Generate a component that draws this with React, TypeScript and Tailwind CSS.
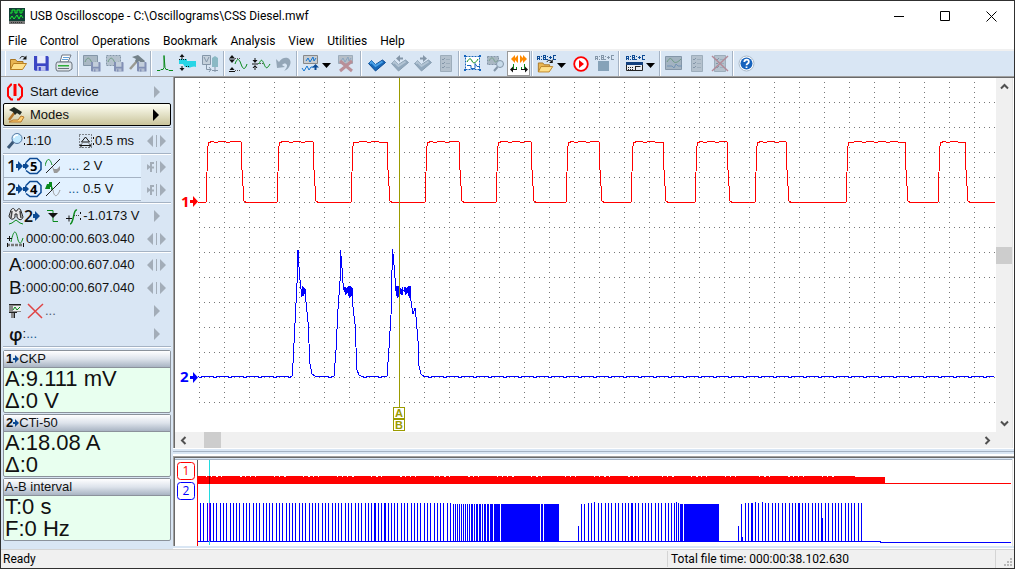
import type { ReactNode } from 'react';

const menuItems = ['File', 'Control', 'Operations', 'Bookmark', 'Analysis', 'View', 'Utilities', 'Help'];

const GREEN = '#0a8a1c';
const NAVY = '#0c4a94';
const MUTED = '#9dadbb';
const MUTED_DARK = '#8496a8';

/* ---------- shared drawing pieces ---------- */

function Icon({ children, size = 20 }: { children: ReactNode; size?: number }) {
  return (
    <svg width={size} height={size} viewBox={`0 0 ${size} ${size}`} fill="none" className="shrink-0" aria-hidden="true">
      {children}
    </svg>
  );
}

function Floppy({ x, y, s, body, label }: { x: number; y: number; s: number; body: string; label: string }) {
  return (
    <g transform={`translate(${x} ${y}) scale(${s})`}>
      <path d="M0 0h13l1 1v13H1l-1-1z" fill={body} />
      <path d="M3 0h8v7H3z" fill={label} />
      <path d="M3 9.500h8V14H3z" fill={label} opacity=".75" />
      <path d="M4.500 10.500h2V14h-2z" fill={body} />
    </g>
  );
}

function Folder() {
  return (
    <g>
      <path d="M1.500 15.500v-10h5l1.500 2H14v3" fill="#e8b552" stroke="#a87422" />
      <path d="M1.500 15.500l3-6h13l-4 6z" fill="#ffe08a" stroke="#b98022" />
      <path d="M11 4.500c1-2.500 3-2.500 5-1" stroke="#111" />
      <path d="M17.500 1.500v4h-4z" fill="#111" />
    </g>
  );
}

function Hammer({ handle, head }: { handle: string; head: string }) {
  return (
    <g>
      <path d="M10 6L2 15" stroke={handle} strokeWidth="2.500" />
      <path d="M4 3l6-2 7 6-2 3-4-3-2 2-2-2 1-2z" fill={head} />
    </g>
  );
}

function AbcLabel({ color }: { color: string }) {
  return (
    <g stroke={color} shapeRendering="crispEdges">
      <path d="M1.500 6V2.500h2V6M1.500 4.500h2M7.500 6V1.500h2V6M7.500 3.500h2M7.500 5.500h3M13 3.500h3M14.500 2v3M20 1.500h-2.500v4H20" />
      <path d="M5 2.500h1M5 5.500h1M11 2.500h1M11 5.500h1" />
    </g>
  );
}

function Check({ from, to, edge }: { from: string; to: string; edge: string }) {
  return (
    <>
      <path d="M1.500 9.500l3-3 4 4 7-4.500 3 2.500-10 8.500z" fill={to} stroke={edge} strokeLinejoin="round" />
      <path d="M3 9.500l1.500-1.500 4 4 7-4.500" stroke={from} strokeWidth="2" />
    </>
  );
}

function UpDown({ x, top, bottom }: { x: number; top: number; bottom: number }) {
  return (
    <g fill="#111">
      <path d={`M${x - 2.5} ${top + 3}h5l-2.500 -3z`} />
      <path d={`M${x - 2.5} ${top + 5}h5l-2.500 3z`} />
      <path d={`M${x - 3} ${top + 3.5}h6v1h-6z`} />
      <path d={`M${x - 2.5} ${bottom - 2}h5l-2.500 -3z`} />
      <path d={`M${x - 3} ${bottom - 1}h6v1h-6z`} />
    </g>
  );
}

function SheetLines() {
  return (
    <>
      <path d="M4.500 1.500h11v16h-11z" fill="#b4c1cd" stroke={MUTED} />
      <path d="M6 5l1 1 2-2M6 9l1 1 2-2M6 13l1 1 2-2" stroke={MUTED_DARK} />
      <path d="M10 5.500h4M10 9.500h4M10 13.500h4" stroke={MUTED} />
    </>
  );
}

/* ---------- toolbar ---------- */

const toolbarIcons: Record<string, ReactNode> = {
  Open: <Folder />,
  Save: <Floppy x={2} y={2} s={1.05} body="#3b46c4" label="#e8ecfb" />,
  Print: (
    <>
      <path d="M5 8l2-7h9l-3 7z" fill="#fff" stroke="#6c7480" />
      <path d="M8 3.500h6M7 5.500h6" stroke="#62a0d8" />
      <path d="M2 8h14l1 2v5l-3 2H2l-1-2v-5z" fill="#dfe5ea" stroke="#69727c" />
      <path d="M3 11h11v1.500H3z" fill="#2fae3b" />
      <path d="M3 14.500h11" stroke="#69727c" />
    </>
  ),
  'Save screen': (
    <>
      <path d="M1.500 1.500h14v10h-14z" fill="#aab8c4" stroke={MUTED_DARK} />
      <path d="M3 8c2-5 4-5 6-1s3 2 5 1" stroke="#6f9b86" />
      <Floppy x={9} y={8} s={0.68} body="#8290b5" label="#c3cedb" />
    </>
  ),
  'Save fragment': (
    <>
      <path d="M1.500 1.500h14v10h-14z" fill="#b4c1cd" stroke={MUTED_DARK} strokeDasharray="2 1" />
      <path d="M3 8c2-5 4-5 6-1s3 2 5 1" stroke="#6f9b86" />
      <Floppy x={9} y={8} s={0.68} body="#8290b5" label="#c3cedb" />
    </>
  ),
  'Save settings': (
    <>
      <Hammer handle="#9a9a92" head="#74828a" />
      <Floppy x={9} y={8} s={0.68} body="#8290b5" label="#c3cedb" />
    </>
  ),
  Spectrum: <path d="M2 16.500h3l1-1h2l1-2V1.500l1 12 1 2h2l1 1h4" stroke={GREEN} />,
  Level: (
    <>
      <path d="M1 5h8v2h9v6c-3-2-6 2-9 0H7l-2-3H1z" fill="#27d5e6" />
      <path d="M1 5.500h8M8 12.500h4" stroke="#111" strokeDasharray="1 1" />
      <path d="M4 0l2.500 3h-5zM4 17l2.500-3h-5zM3.500 3h1v2h-1zM3.500 12h1v2h-1z" fill="#111" />
    </>
  ),
  Voltmeter: (
    <>
      <path d="M1.500 1.500h8v9h-8z" fill="#c5d1dc" stroke={MUTED_DARK} />
      <path d="M3 3l2.500 5L8 3M5.500 11v4.500H10M8 13l2 2.500L8 18" stroke={MUTED_DARK} />
      <path d="M11 4l3-2 3 2v9h-6z" fill="#8ab9c4" />
      <path d="M11 16.500h6M14 13v5" stroke={MUTED_DARK} />
    </>
  ),
  'Fit height': (
    <>
      <UpDown x={4} top={1} bottom={18} />
      <path d="M7 4.500h5M7 16.500h5" stroke="#555" strokeDasharray="1 1" />
      <path d="M7 10c2-6 4-6 6 0s4 6 6 0" stroke={GREEN} />
    </>
  ),
  'Compress height': (
    <>
      <path d="M4 9L1.500 6h5zM4 11l-2.500 3h5zM3.500 4h1v3h-1zM3.500 13h1v3h-1zM1 9.500h6v1H1z" fill="#111" />
      <path d="M7 9.500h6" stroke="#555" strokeDasharray="1 1" />
      <path d="M8 10c2-5 3-5 5 0s3 5 6 0" stroke={GREEN} />
    </>
  ),
  Undo: <path d="M2 5l3 3c4-7 14-5 11 3-1 3-3 5-6 6 3-3 4-6 2-7-1-1-3 0-4 1l3 2-8 1z" fill="#94a6b7" />,
  'Add trace': (
    <>
      <path d="M2.500 1.500h14v8h-14z" fill="#c7ccd1" stroke="#888" />
      <path d="M5 7l2-3 2 4 3-5 1 4 2-3" stroke="#1274d0" />
      <path d="M1 14l2 3 3-5 2 4 2-3h3" stroke="#1274d0" />
      <path d="M14.500 10l3.500 3.500h-7zM13.500 13h2v3h-2z" fill={NAVY} />
    </>
  ),
  'Remove trace': (
    <>
      <path d="M2.500 1.500h14v8h-14z" fill="#b5bec7" stroke={MUTED} />
      <path d="M5 7l2-3 2 4 3-5 1 4 2-3" stroke="#8aa5bf" />
      <path d="M4 7l12 10M16 7L4 17" stroke="#b98f98" strokeWidth="3" />
    </>
  ),
  'Set bookmark': <Check from="#4aa0e6" to="#1668b8" edge="#0c4a94" />,
  'Previous bookmark': (
    <>
      <Check from="#b2c4d4" to="#91a8bd" edge="#899fb2" />
      <path d="M6 4.500L10 1v2.500h3v2h-3V8z" fill={MUTED_DARK} />
    </>
  ),
  'Next bookmark': (
    <>
      <Check from="#b2c4d4" to="#91a8bd" edge="#899fb2" />
      <path d="M14 4.500L10 1v2.500H7v2h3V8z" fill={MUTED_DARK} />
    </>
  ),
  'Bookmark list': <SheetLines />,
  'Select area': (
    <>
      <path d="M2.500 2.500h14v13h-14z" fill="#fff" stroke="#1765bd" strokeDasharray="2 1" />
      <path d="M4 8c2-4 4-4 5-1s4 2 6-2" stroke={GREEN} />
      <path d="M4 11.500h4v3h4v-5l2 3h3" stroke="#1765bd" />
      <path d="M1 1h2v2H1zM16 1h2v2h-2zM1 15h2v2H1zM16 15h2v2h-2z" fill="#1765bd" />
    </>
  ),
  'Zoom area': (
    <>
      <path d="M1.500 2.500h11v8h-11z" fill="#a9b7c3" stroke={MUTED_DARK} strokeDasharray="2 1" />
      <path d="M3 7c2-4 4-4 5-1s2 2 4 0" stroke="#79a28d" />
      <circle cx="14" cy="10" r="3.500" fill="#c8dbea" stroke={MUTED_DARK} />
      <path d="M11.500 13L8 17" stroke={MUTED_DARK} strokeWidth="2" />
    </>
  ),
  'Run analysis': (
    <>
      <path d="M2 5l4-4v3l3-3v8L6 6v3zM18 5l-4-4v3l-3-3v8l3-3v3z" fill="#ff8a00" />
      <path d="M4.500 10v5.500h3V13M15.500 10v5.500h-3V13" stroke={GREEN} />
      <path d="M1 15.500l3-3v6zM19 15.500l-3-3v6zM4 15h4v1H4zM12 15h4v1h-4z" fill="#111" />
    </>
  ),
  'Open script': (
    <>
      <AbcLabel color={NAVY} />
      <g transform="translate(1 4) scale(.9)">
        <Folder />
      </g>
    </>
  ),
  'Run script': (
    <>
      <circle cx="10" cy="10" r="6.800" fill="#fff" stroke="#f00" strokeWidth="1.800" />
      <path d="M8 6l5 4-5 4z" fill="#f00" />
    </>
  ),
  'Stop script': (
    <>
      <AbcLabel color={MUTED_DARK} />
      <path d="M4 7h11v10H4z" fill="#86a2b8" />
    </>
  ),
  'Script panel': (
    <>
      <AbcLabel color={NAVY} />
      <path d="M1.500 8.500h16v8h-16z" fill="#e9edf2" stroke="#222" />
      <path d="M1 8h17v3H1z" fill="#12407e" />
      <path d="M3 13.500h5M3 15.500h5" stroke="#222" strokeDasharray="1 1" />
      <path d="M10.500 12.500h5M10.500 12v4" stroke="#222" />
    </>
  ),
  Picture: (
    <>
      <path d="M1.500 2.500h16v13h-16z" fill="#a3b3c1" stroke={MUTED_DARK} />
      <path d="M3 8c3-5 4-4 6-1s5 1 8-2" stroke="#6f9b86" />
      <path d="M3 12h5l2 2 2-4 2 2h4" stroke="#7292b4" />
    </>
  ),
  Report: <SheetLines />,
  'Delete report': (
    <>
      <SheetLines />
      <path d="M2 2l16 15M18 2L2 17" stroke="#b28b99" strokeWidth="1.500" />
    </>
  ),
  Help: (
    <>
      <circle cx="9.500" cy="9.500" r="7.500" fill="#fff" stroke="#a9b9c9" />
      <circle cx="9.500" cy="9.500" r="6" fill="#1763bd" />
      <path d="M7.300 8c0-3.300 5-3.300 4.500 0 0 1.500-2.300 1.500-2.300 3.300M9.500 12.500v1.600" stroke="#fff" strokeWidth="1.800" />
    </>
  ),
};

function Tool({ name, pressed = false }: { name: string; pressed?: boolean }) {
  return (
    <button
      type="button"
      aria-label={name}
      className={`flex w-[23px] shrink-0 items-center justify-center ${pressed ? 'border border-[#999] bg-white' : ''}`}
    >
      <Icon>{toolbarIcons[name]}</Icon>
    </button>
  );
}

function ToolSep({ wide = false }: { wide?: boolean }) {
  return (
    <div className={`flex shrink-0 justify-center ${wide ? 'w-2' : 'w-1'}`}>
      <div className="w-px bg-[#a5b3c4]" />
      <div className="w-px bg-white" />
    </div>
  );
}

function DropArrow({ name }: { name: string }) {
  return (
    <button type="button" aria-label={name} className="flex w-3 shrink-0 items-center pt-1">
      <svg width="9" height="5" viewBox="0 0 9 5" aria-hidden="true">
        <path d="M0 0h9L4.500 5z" fill="#000" />
      </svg>
    </button>
  );
}

function Toolbar() {
  return (
    <div className="flex h-[25px] shrink-0 overflow-hidden bg-[#d9e6f4] pl-1" role="toolbar" aria-label="Main">
      <div className="mr-px w-px bg-white" />
      <Tool name="Open" />
      <Tool name="Save" />
      <Tool name="Print" />
      <ToolSep />
      <Tool name="Save screen" />
      <Tool name="Save fragment" />
      <Tool name="Save settings" />
      <ToolSep />
      <Tool name="Spectrum" />
      <Tool name="Level" />
      <Tool name="Voltmeter" />
      <ToolSep />
      <Tool name="Fit height" />
      <Tool name="Compress height" />
      <Tool name="Undo" />
      <ToolSep />
      <Tool name="Add trace" />
      <DropArrow name="Trace options" />
      <Tool name="Remove trace" />
      <ToolSep wide />
      <Tool name="Set bookmark" />
      <Tool name="Previous bookmark" />
      <Tool name="Next bookmark" />
      <Tool name="Bookmark list" />
      <ToolSep />
      <Tool name="Select area" />
      <Tool name="Zoom area" />
      <Tool name="Run analysis" pressed />
      <ToolSep />
      <Tool name="Open script" />
      <DropArrow name="Recent scripts" />
      <Tool name="Run script" />
      <Tool name="Stop script" />
      <ToolSep wide />
      <Tool name="Script panel" />
      <DropArrow name="Panel options" />
      <ToolSep />
      <Tool name="Picture" />
      <Tool name="Report" />
      <Tool name="Delete report" />
      <ToolSep />
      <Tool name="Help" />
    </div>
  );
}

/* ---------- sidebar ---------- */

function ArrowSingle({ dark = false }: { dark?: boolean }) {
  return (
    <svg width="30" height="12" viewBox="0 0 30 12" className="shrink-0" aria-hidden="true">
      <path d="M13 0v12l6-6z" fill={dark ? '#000' : '#a3adb8'} />
    </svg>
  );
}

function ArrowPair() {
  return (
    <svg width="30" height="12" viewBox="0 0 30 12" className="shrink-0" aria-hidden="true">
      <path d="M12 0v12L6 6zM19 0v12l6-6zM15 0h1v12h-1z" fill="#a3adb8" />
    </svg>
  );
}

function ArrowFlip() {
  return (
    <svg width="30" height="12" viewBox="0 0 30 12" className="shrink-0" aria-hidden="true">
      <path d="M13 2h-3v9M13 6.500H9" fill="none" stroke="#a3adb8" strokeWidth="2" />
      <path d="M6 3l4 3-4 3zM19 0v12l6-6zM15 0h1v12h-1z" fill="#a3adb8" />
    </svg>
  );
}

function Divider() {
  return (
    <div className="flex h-[3px] shrink-0 flex-col justify-end">
      <div className="h-px bg-[#a5b3c4]" />
      <div className="h-px bg-white" />
    </div>
  );
}

function Row({ label, children, arrow }: { label: string; children: ReactNode; arrow: ReactNode }) {
  return (
    <button type="button" aria-label={label} className="flex h-[23px] w-full shrink-0 items-center text-left">
      <span className="flex min-w-0 flex-1 items-center whitespace-nowrap">{children}</span>
      {arrow}
    </button>
  );
}

function ChannelMark({ n }: { n: number }) {
  return (
    <span className="flex items-center font-['Open_Sans',sans-serif] text-base leading-4 font-semibold">
      {n}
      <svg width="7" height="10" viewBox="0 0 7 10" className="shrink-0" aria-hidden="true">
        <path d="M0 3h2V0l5 5-5 5V7H0z" fill={NAVY} />
      </svg>
    </span>
  );
}

function Channel({ n, input, value, filled }: { n: number; input: number; value: string; filled: 'top' | 'bottom' }) {
  return (
    <button type="button" className="flex h-[23px] w-full items-center text-left">
      <span className="flex h-[23px] flex-1 items-center border-b border-l border-b-[#a5b3c4] border-l-[#a5b3c4] bg-[#e2f1ff] pl-[3px]">
        <ChannelMark n={n} />
        <svg width="20" height="18" viewBox="0 0 20 18" className="shrink-0" aria-hidden="true">
          <path d="M0 7h2V5l4 4-4 4v-2H0z" fill={NAVY} />
          <path d="M3 5.500l4-4h7l4 4v7l-4 4H7l-4-3" fill="none" stroke={NAVY} strokeWidth="1.500" />
          <text x="7" y="14" fontSize="13" fontWeight="700" fontFamily="Open Sans">{input}</text>
        </svg>
        <svg width="16" height="16" viewBox="0 0 16 16" className="ml-[2px] shrink-0" aria-hidden="true">
          {filled === 'top' ? (
            <>
              <path d="M0 8l2-5h2V1h3v4l1 3-2 1V6H5v2H2z" fill={GREEN} />
              <path d="M8 9c1 7 4 8 7 0" fill="none" stroke="#999" />
            </>
          ) : (
            <>
              <path d="M0 8c2-9 5-8 7-1" fill="none" stroke={GREEN} />
              <path d="M7 8l2 3h3l3-3v4l-3 3H9z" fill="#9a9a9a" />
            </>
          )}
          <path d="M15 1L1 15" stroke="#222" />
        </svg>
        <span className="ml-[7px] text-[#14598f]">...</span>
        <span className="ml-1">{value}</span>
      </span>
      <ArrowFlip />
    </button>
  );
}

function Readout({ title, mark, lines }: { title: string; mark?: number; lines: string[] }) {
  return (
    <section className="mb-px shrink-0 rounded-xs border border-[#8b929b] bg-[#e8ffef]">
      <h2 className="flex h-[17px] items-center border-b border-[#8b929b] bg-linear-to-b from-white via-[#dde3eb] to-[#a9b4c3] pl-px text-[13px] leading-4">
        {mark && (
          <span className="flex items-center pl-px font-bold">
            {mark}
            <svg width="6" height="8" viewBox="0 0 6 8" aria-hidden="true">
              <path d="M0 3h2V0l4 4-4 4V5H0z" fill={NAVY} />
            </svg>
          </span>
        )}
        {title}
      </h2>
      <div className="px-px text-[22px] leading-[22px]">
        {lines.map((line) => (
          <p key={line}>{line}</p>
        ))}
      </div>
    </section>
  );
}

function Sidebar() {
  return (
    <aside className="flex w-[172px] shrink-0 flex-col bg-[#d9e6f4] px-[2px] pt-[3px] font-['Liberation_Sans',sans-serif] text-[13px] leading-5 text-[#111]">
      <Row label="Start device" arrow={<ArrowSingle />}>
        <svg width="20" height="18" viewBox="0 0 20 18" className="mr-1 ml-[3px] shrink-0" aria-hidden="true">
          <path d="M6 1.500H5L2 5v8l3 3.500h2M12 1.500h1L16 5v8l-3 3.500h-2" fill="none" stroke="#f00" strokeWidth="2" />
          <path d="M7.500 1h3v12h-3z" fill="#f00" />
        </svg>
        Start device
      </Row>
      <button
        type="button"
        className="flex h-[23px] shrink-0 items-center rounded-xs border border-black bg-linear-to-b from-[#fffff4] to-[#c9c49b] text-left"
      >
        <svg width="20" height="18" viewBox="0 0 20 18" className="mr-[3px] ml-[3px] shrink-0" aria-hidden="true">
          <path d="M8 6l-6 8" stroke="#b5782c" strokeWidth="2.500" />
          <path d="M2 4l5-3 8 5-2 3-3-2-2 2-2-3z" fill="#242b22" />
          <path d="M2 16l4-2h5l3-4 3 1-3 5z" fill="#ffcf72" stroke="#b5782c" />
        </svg>
        <span className="flex-1">Modes</span>
        <ArrowSingle dark />
      </button>
      <Divider />
      <Row label="Scale" arrow={<ArrowPair />}>
        <svg width="20" height="18" viewBox="0 0 20 18" className="ml-[3px] shrink-0" aria-hidden="true">
          <path d="M8 9l-6 7" stroke="#3b5877" strokeWidth="3" />
          <circle cx="11" cy="6.500" r="5" fill="#c3eaff" stroke="#5779a3" />
          <path d="M8 6c0-2 2-3 4-3" fill="none" stroke="#fff" strokeWidth="1.500" />
          <path d="M18 5h1v2h-1zM18 11h1v2h-1z" fill="#111" />
        </svg>
        <span className="w-[51px]">1:10</span>
        <svg width="18" height="18" viewBox="0 0 18 18" className="shrink-0" aria-hidden="true">
          <path d="M2.500 2.500h12v13h-12z" fill="none" stroke="#222" strokeDasharray="1 2" />
          <path d="M8.500 5L4.500 10h8zM3 13.500h11M5 11.500l-2 2 2 2M12 11.500l2 2-2 2" fill="none" stroke="#111" />
          <path d="M16 5h1v2h-1zM16 11h1v2h-1z" fill="#111" />
        </svg>
        0.5 ms
      </Row>
      <Divider />
      <Channel n={1} input={5} value="2 V" filled="bottom" />
      <Channel n={2} input={4} value="0.5 V" filled="top" />
      <Divider />
      <Row label="Trigger" arrow={<ArrowSingle />}>
        <svg width="16" height="18" viewBox="0 0 16 18" className="ml-[5px] shrink-0" aria-hidden="true">
          <path d="M1 9l2-6c2-3 4-1 4 1h2c0-2 3-4 4 0l2 6c-1 4-5 3-6 0V7H7v3c-1 3-5 3-6-1z" fill="#e7e7e7" stroke="#222" />
          <path d="M4 4l-1 7M12 4l1 7" stroke="#444" strokeWidth="1.500" />
          <path d="M1 17l3-1 4-3 4 3 3 1" fill="none" stroke={GREEN} />
        </svg>
        <ChannelMark n={2} />
        <svg width="14" height="14" viewBox="0 0 14 14" className="ml-[6px] shrink-0" aria-hidden="true">
          <path d="M1 1.500h6v11h5" fill="none" stroke={GREEN} />
          <path d="M2 4h10l-5 5z" fill="#111" />
        </svg>
        <svg width="17" height="18" viewBox="0 0 17 18" className="ml-[6px] shrink-0" aria-hidden="true">
          <path d="M4 17c4 0 3-15 7-14" fill="none" stroke={GREEN} strokeWidth="1.500" />
          <path d="M8 8.500h6" stroke="#444" strokeDasharray="1 1" />
          <path d="M0 11.500h6M3 8.500v6" stroke="#111" />
          <path d="M14 5h1v2h-1zM14 11h1v2h-1z" fill="#111" />
        </svg>
        -1.0173 V
      </Row>
      <Row label="Position" arrow={<ArrowPair />}>
        <svg width="23" height="18" viewBox="0 0 23 18" className="shrink-0" aria-hidden="true">
          <path d="M8 12c3-14 5-12 7-2 2 5 3 4 5-2" fill="none" stroke={GREEN} />
          <path d="M4 8.500h5M6.500 6v5" stroke="#111" />
          <path d="M4 15h17" stroke="#777" strokeWidth="2.500" strokeDasharray="3 1" />
          <path d="M4.500 13v4M20.500 13v4" stroke="#111" />
        </svg>
        000:00:00.603.040
      </Row>
      <Divider />
      {['A', 'B'].map((marker) => (
        <Row key={marker} label={`Marker ${marker}`} arrow={<ArrowPair />}>
          <span className="flex w-[23px] items-center pl-[6px] text-[19px]">
            {marker}
            <span className="text-[13px]">:</span>
          </span>
          000:00:00.607.040
        </Row>
      ))}
      <Row label="Ruler" arrow={<ArrowSingle />}>
        <svg width="37" height="18" viewBox="0 0 37 18" className="ml-[5px] shrink-0" aria-hidden="true">
          <path d="M1 2h12v8H6v6H3v-6H1z" fill="#888" />
          <path d="M1 2.500h12M1 10.500h8M6.500 16v-6" stroke="#222" />
          <path d="M5 4h8v5H5z" fill="#eee" />
          <path d="M5 8l2-3 2 3 3-3" fill="none" stroke={GREEN} />
          <path d="M20 2l14 14M35 2L20 16" stroke="#df4545" strokeWidth="1.500" />
        </svg>
        <span className="text-[#506070]">...</span>
      </Row>
      <Row label="Phase" arrow={<ArrowSingle />}>
        <span className="ml-[6px] font-['Open_Sans',sans-serif] text-lg leading-5 font-semibold">φ</span>
        <span>:</span>
        <span className="text-[#14598f]">...</span>
      </Row>
      <Divider />
      <div className="mt-[2px] flex flex-col">
        <Readout mark={1} title="CKP" lines={['A:9.111 mV', 'Δ:0 V']} />
        <Readout mark={2} title="CTi-50" lines={['A:18.08 A', 'Δ:0']} />
        <Readout title="A-B interval" lines={['T:0 s', 'F:0 Hz']} />
      </div>
    </aside>
  );
}

/* ---------- main oscillogram ---------- */

// Rise and fall positions of the crankshaft pulses
const pulses = [
  [206, 241], [277, 313], [351, 387], [425, 459], [496, 531], [566, 599],
  [631, 663], [695, 727], [755, 786], [846, 905], [938, 965],
];

const crankTrace = 'M198 202.500' + pulses
  .map(([rise, fall]) => {
    let top = '';
    for (let x = rise + 6; x < fall - 3; x += 4) top += `L${x} ${x % 3 === 0 ? 142.5 : 141.5}`;
    return `H${rise}L${rise + 1} 172L${rise + 2} 146L${rise + 3} 142.500${top}L${fall} 142L${fall + 1} 170L${fall + 3} 201L${fall + 5} 202.500`;
  })
  .join('') + 'H995';

// Irregular ripple on the plateau of an injector current pulse
const rippleSteps = [287, 294, 289, 296, 290, 286, 295, 288, 293, 287, 297, 291];

function ripple(from: number, to: number) {
  let d = '';
  for (let x = from; x <= to; x += 1) d += `L${x} ${rippleSteps[(x * 5) % 12]}L${x + 0.5} ${rippleSteps[(x * 7 + 3) % 12]}`;
  return d;
}

function flat(from: number, to: number) {
  let d = '';
  for (let x = from; x <= to; x += 3) d += `L${x} ${(x * 7) % 5 === 0 ? 377.5 : 376.5}`;
  return d;
}

const injectorTrace =
  'M198 376.500' + flat(200, 291) +
  'L292 376L293 363L295 323L297 283L298 250L299 267L300 280L301 289' + ripple(302, 305) +
  'L306 302L308 322L310 364L312 374L315 376' + flat(318, 333) +
  'L334 376L336 350L338 309L340 282L340.500 250L342 268L343 283' + ripple(344, 352) +
  'L353 307L355 324L357 370L359 375' + flat(362, 386) +
  'L387 376L389 348L391 315L392.500 249L394 265L396 291' + ripple(396, 410) +
  'L411 301L413 314L415 308L416 317L418 341L419 366L421 374' + flat(424, 994);

const gridColumns = Array.from({ length: 32 }, (_, i) => 199.5 + i * 25);
const gridRows = Array.from({ length: 13 }, (_, i) => 102.5 + i * 25);

function Oscillogram() {
  return (
    <svg viewBox="175 78 821 354" preserveAspectRatio="xMinYMin slice" className="h-full w-full" role="img" aria-label="Oscillogram">
      <g stroke="#777" strokeDasharray="1 4" shapeRendering="crispEdges">
        {gridColumns.map((x) => (
          <path key={x} d={`M${x} 82V403`} />
        ))}
        {gridRows.map((y) => (
          <path key={y} d={`M199 ${y}H995`} />
        ))}
      </g>
      <g fill="none" strokeWidth="1" shapeRendering="crispEdges">
        <path d={crankTrace} stroke="#f00" />
        <path d={injectorTrace} stroke="#00f" />
        <path d="M399.500 78V407" stroke="#9b9b00" />
      </g>
      <g fontFamily="Open Sans, sans-serif" fontSize="15" fontWeight="700">
        <text x="181" y="207" fill="#f00">1</text>
        <text x="180" y="382" fill="#00f">2</text>
      </g>
      <path d="M190 200h3v-4l5 5.500-5 5.500v-4h-3z" fill="#f00" />
      <path d="M190 376h3v-4l5 5.500-5 5.500v-4h-3z" fill="#00f" />
      <g fill="#fff" stroke="#9b9b00" shapeRendering="crispEdges">
        <rect x="393.500" y="407.500" width="11" height="11" rx="1" />
        <rect x="393.500" y="419.500" width="11" height="11" rx="1" />
      </g>
      <g fontFamily="Liberation Sans, sans-serif" fontSize="11" fontWeight="700" fill="#9b9b00" textAnchor="middle">
        <text x="399" y="417">A</text>
        <text x="399" y="429">B</text>
      </g>
    </svg>
  );
}

function Chevron({ turn }: { turn: string }) {
  return (
    <svg width="9" height="9" viewBox="0 0 9 9" className={turn} aria-hidden="true">
      <path d="M1 6.500l3.500-3.500L8 6.500" fill="none" stroke="#505050" strokeWidth="2" />
    </svg>
  );
}

/* ---------- file overview ---------- */

// [x, width, top] of every bar in the injector overview
const bars: number[][] = [];
for (let i = 0; i < 77; i += 1) bars.push([Math.round(200 + i * 3.29), i === 53 || i === 56 ? 2 : 1, 503]);
for (let x = 453; x < 471; x += 2) bars.push([x, 1, 504]);
bars.push(
  [471, 2, 504], [474, 1, 504], [476, 2, 504], [479, 2, 504], [482, 1, 504], [484, 2, 504], [487, 2, 504],
  [490, 3, 504], [494, 6, 504], [501, 39, 504], [541, 2, 504], [544, 15, 504],
  [578, 1, 526], [581, 1, 504], [584, 1, 504],
);
[588, 591, 594, 598, 601, 605, 608, 611, 615, 618, 622, 625, 628, 631, 635, 638, 642, 645, 648, 651, 655, 658, 661, 665, 668, 671, 674, 676, 678].forEach(
  (x) => bars.push([x, x === 631 ? 2 : 1, x === 594 || x === 676 ? 502 : 503]),
);
bars.push([680, 3, 504], [684, 35, 504], [738, 1, 526], [741, 1, 504], [742, 1, 537]);
[745, 748, 751, 755, 758, 762, 765, 768, 772, 775, 778, 782, 785, 789, 792, 795, 798, 802, 805, 808, 812, 815, 818, 821, 825, 828, 832, 835, 838, 841, 845, 848, 851, 854, 858, 861].forEach(
  (x) => bars.push([x, x === 751 || x === 798 ? 2 : 1, x === 755 || x === 762 ? 502 : 503]),
);
bars.push([822, 1, 518]);

// Gaps along the upper edge of the crank signal band
const nicks = Array.from({ length: 70 }, (_, i) => 206 + ((i * 97) % 645));

function Overview() {
  return (
    <svg viewBox="175 460 837 86" preserveAspectRatio="xMinYMin slice" className="h-full w-full" role="img" aria-label="File overview">
      <g shapeRendering="crispEdges">
        <rect x="197" y="476" width="658" height="8" fill="#f00" />
        <rect x="855" y="477" width="30" height="7" fill="#f00" />
        <rect x="885" y="483" width="126" height="1" fill="#f00" />
        {nicks.map((x) => (
          <rect key={x} x={x} y="476" width={x % 4 === 0 ? 2 : 1} height="1" fill="#fff" />
        ))}
        {bars.map(([x, width, top]) => (
          <rect key={`${x}-${top}`} x={x} y={top} width={width} height={541 - top} fill="#00f" />
        ))}
        <path d="M197 541.500H880V542.500H1011" fill="none" stroke="#00f" />
        <path d="M197.500 460V476" stroke="#666" />
        <path d="M197.500 476V546" stroke="#f00" />
        <path d="M209.500 460V545" stroke="#20dce0" />
        <path d="M209.500 476V484" stroke="#8b0000" />
        <path d="M209.500 503V541" stroke="#9a00e8" />
      </g>
      <rect x="177.500" y="462.500" width="17" height="17" rx="3" fill="#fff" stroke="#f00" />
      <rect x="177.500" y="482.500" width="17" height="17" rx="3" fill="#fff" stroke="#00f" />
      <g fontFamily="Open Sans, sans-serif" fontSize="12" textAnchor="middle">
        <text x="186" y="475" fill="#f00">1</text>
        <text x="186" y="495" fill="#00f">2</text>
      </g>
    </svg>
  );
}

function Workspace() {
  return (
    <div className="flex min-w-0 flex-1 flex-col bg-[#d9e6f4]">
      <div className="flex min-h-0 flex-1 border-l border-[#a0a0a0]">
        <div className="flex min-w-0 flex-1 border-t border-l border-[#696969]">
          <div className="flex min-w-0 flex-1 flex-col">
            <div className="min-h-0 flex-1 overflow-hidden bg-white">
              <Oscillogram />
            </div>
            <div className="flex h-4 shrink-0 bg-[#f0f0f0]">
              <button type="button" aria-label="Scroll left" className="flex w-[17px] items-center justify-center">
                <Chevron turn="-rotate-90" />
              </button>
              <div className="ml-3 w-[17px] bg-[#cdcdcd]" />
              <button type="button" aria-label="Scroll right" className="ml-auto flex w-[17px] items-center justify-center">
                <Chevron turn="rotate-90" />
              </button>
            </div>
          </div>
          <div className="flex w-4 shrink-0 flex-col bg-[#f0f0f0] pb-4">
            <button type="button" aria-label="Scroll up" className="flex h-[17px] items-center justify-center">
              <Chevron turn="rotate-0" />
            </button>
            <div className="flex-1" />
            <div className="h-[17px] bg-[#cdcdcd]" />
            <div className="flex-1" />
            <button type="button" aria-label="Scroll down" className="flex h-[17px] items-center justify-center">
              <Chevron turn="rotate-180" />
            </button>
          </div>
          <div className="w-[2px] border-r border-white bg-[#e3e3e3]" />
        </div>
      </div>
      <div className="h-[3px] shrink-0 border-t border-white" />
      <div className="h-px shrink-0 bg-[#a5b3c4]" />
      <div className="h-1 shrink-0 border-b-2 border-white" />
      <div className="shrink-0 border-t border-l border-[#a0a0a0]">
        <div className="border-t border-l border-[#696969]">
          <div className="flex pt-px">
            <div className="h-[87px] min-w-0 flex-1 overflow-hidden border-t border-[#a5b3c4] bg-white">
              <Overview />
            </div>
            <div className="w-[2px] border-r border-white bg-[#e3e3e3]" />
          </div>
        </div>
      </div>
      <div className="h-[3px] shrink-0 border-b border-white" />
    </div>
  );
}

/* ---------- window ---------- */

export default function App() {
  return (
    <div className="flex h-screen min-h-[569px] flex-col border border-[#303030] bg-white font-['Roboto',sans-serif] text-xs text-black">
      <header className="flex h-[30px] shrink-0 items-center pl-2">
        <svg width="16" height="16" viewBox="0 0 16 16" aria-hidden="true">
          <path d="M0 0h16v13H0z" fill="#123f36" />
          <path d="M0 13h16v3H0z" fill="#777" />
          <path d="M1 5h2V2h3v3h2V2h3v3h2V2h2M1 11l2-3 2 3 3-4 2 4 2-4 2 3" fill="none" stroke="#18ef32" />
          <path d="M2 14.500h12" stroke="#333" strokeDasharray="1 1" />
        </svg>
        <h1 className="ml-[5px] flex-1 whitespace-nowrap">USB Oscilloscope - C:\Oscillograms\CSS Diesel.mwf</h1>
        <button type="button" aria-label="Minimize" className="flex h-full w-[46px] items-center justify-center">
          <svg width="11" height="11" viewBox="0 0 11 11" aria-hidden="true">
            <path d="M0 5.500h10" stroke="#000" />
          </svg>
        </button>
        <button type="button" aria-label="Maximize" className="flex h-full w-[46px] items-center justify-center">
          <svg width="11" height="11" viewBox="0 0 11 11" aria-hidden="true">
            <path d="M.5.500h9v9h-9z" fill="none" stroke="#000" />
          </svg>
        </button>
        <button type="button" aria-label="Close" className="flex h-full w-[46px] items-center justify-center">
          <svg width="11" height="11" viewBox="0 0 11 11" aria-hidden="true">
            <path d="M.5.500l10 10M10.500.500l-10 10" stroke="#000" />
          </svg>
        </button>
      </header>

      <nav className="flex h-[20px] shrink-0 items-center gap-[13px] border-b-2 border-[#f0f0f0] pt-[2px] pl-[7px]">
        {menuItems.map((item) => (
          <button key={item} type="button" className="leading-4">
            {item}
          </button>
        ))}
      </nav>

      <Toolbar />

      <main className="flex min-h-0 flex-1 border-t border-[#a0a0a0]">
        <Sidebar />
        <Workspace />
      </main>

      <footer className="flex h-[19px] shrink-0 items-center border-t border-[#d4d4d4] bg-[#f0f0f0] leading-4">
        <p className="flex-1 pl-[2px]">Ready</p>
        <p className="w-[328px] border-l border-[#d4d4d4] pl-[3px]">Total file time: 000:00:38.102.630</p>
        <div className="flex h-full w-[19px] items-end justify-end border-l border-[#d4d4d4] p-px">
          <svg width="9" height="9" viewBox="0 0 9 9" aria-hidden="true">
            <path d="M6 0h2v2H6zM3 3h2v2H3zM6 3h2v2H6zM0 6h2v2H0zM3 6h2v2H3zM6 6h2v2H6z" fill="#b8b8b8" />
          </svg>
        </div>
      </footer>
    </div>
  );
}
